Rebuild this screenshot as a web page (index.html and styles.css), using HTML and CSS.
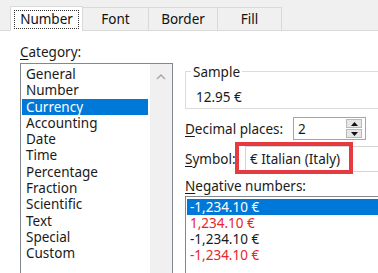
FILE: index.html
```html
<!DOCTYPE html>
<html>
<head>
<meta charset="utf-8">
<link rel="stylesheet" href="styles.css">
</head>
<body>
<div class="tabstrip">
  <div class="tab active w-number"><span class="focus">Number</span></div>
  <div class="tab w-font">Font</div>
  <div class="tab w-border">Border</div>
  <div class="tab w-fill">Fill</div>
</div>
<div class="panel">
  <div class="left">
    <div class="label"><u>C</u>ategory:</div>
    <div class="catlist">
      <div class="items">
        <div class="item">General</div>
        <div class="item">Number</div>
        <div class="item sel">Currency</div>
        <div class="item">Accounting</div>
        <div class="item">Date</div>
        <div class="item">Time</div>
        <div class="item">Percentage</div>
        <div class="item">Fraction</div>
        <div class="item">Scientific</div>
        <div class="item">Text</div>
        <div class="item">Special</div>
        <div class="item">Custom</div>
      </div>
      <div class="scrollbar">
        <svg class="chev" width="10" height="6" viewBox="0 0 10 6"><polyline points="1,5 5,1 9,5" fill="none" stroke="#a6a6a6" stroke-width="1.4"/></svg>
      </div>
    </div>
  </div>
  <div class="right">
    <div class="group">
      <div class="group-title">Sample</div>
      <div class="group-value">12.95 €</div>
    </div>
    <div class="row-dec">
      <div class="dec-label"><u>D</u>ecimal places:</div>
      <div class="spin">
        <span>2</span>
        <div class="spin-btns">
          <div class="sbtn up"><svg width="7" height="4" viewBox="0 0 7 4"><polygon points="0,4 3.5,0 7,4" fill="#111"/></svg></div>
          <div class="sbtn down"><svg width="7" height="4" viewBox="0 0 7 4"><polygon points="0,0 3.5,4 7,0" fill="#111"/></svg></div>
        </div>
      </div>
    </div>
    <div class="row-sym">
      <div class="sym-label"><u>S</u>ymbol:</div>
      <div class="combo">€ Italian (Italy)</div>
      <div class="redbox"></div>
    </div>
    <div class="label neg-label"><u>N</u>egative numbers:</div>
    <div class="neglist">
      <div class="neg-item sel">-1,234.10 €</div>
      <div class="neg-item red">1,234.10 €</div>
      <div class="neg-item">-1,234.10 €</div>
      <div class="neg-item red">-1,234.10 €</div>
    </div>
  </div>
</div>
</body>
</html>
```

FILE: styles.css
```css
html, body {
  margin: 0;
  padding: 0;
  width: 378px;
  height: 273px;
  overflow: hidden;
  background: #fff;
}
body {
  font-family: "Noto Sans", "Open Sans", sans-serif;
  font-size: 13.5px;
  color: #1a1a1a;
}
u { text-decoration-thickness: 1px; text-underline-offset: 2px; }

.tabstrip {
  display: flex;
  align-items: flex-end;
  height: 30px;
  background: #f0f0f0;
  border-bottom: 1px solid #d9d9d9;
  padding-left: 10px;
}
.tab {
  box-sizing: border-box;
  height: 23px;
  border: 1px solid #d9d9d9;
  border-bottom: none;
  margin-left: -1px;
  display: flex;
  align-items: center;
  justify-content: center;
  color: #111;
}
.tab.active {
  height: 25px;
  margin-bottom: -1px;
  background: #fff;
  margin-left: 0;
}
.w-number { width: 73px; }
.w-font { width: 67px; }
.w-border { width: 70px; }
.w-fill { width: 65px; }
.focus {
  box-sizing: border-box;
  width: 65px;
  height: 19px;
  border: 1px dotted #333;
  display: flex;
  align-items: center;
  justify-content: center;
}

.panel {
  display: flex;
  padding: 13px 0 0 20px;
}
.left { width: 153px; flex-shrink: 0; }
.right { width: 230px; flex-shrink: 0; margin-left: 12px; }
.label { line-height: 16px; height: 16px; white-space: nowrap; }

.catlist {
  margin-top: 3px;
  border: 1px solid #828790;
  height: 220px;
  display: flex;
}
.items {
  flex: 1;
  padding: 2px 2px 0 1px;
}
.item {
  line-height: 16.3px;
  height: 16.3px;
  padding-left: 4px;
  white-space: nowrap;
}
.item.sel { background: #0078d7; color: #fff; }
.scrollbar {
  width: 22px;
  background: #f0f0f0;
  display: flex;
  flex-direction: column;
  align-items: center;
}
.chev { margin-top: 10px; }

.group {
  margin-top: 27px;
  border: 1px solid #dcdcdc;
  padding: 0 0 3px 5px;
}
.group-title {
  width: fit-content;
  margin-top: -8px;
  line-height: 16px;
  padding: 0 2px;
  background: #fff;
}
.group-value {
  margin-top: 9px;
  line-height: 16px;
  padding-left: 5px;
}

.row-dec {
  margin-top: 8px;
  height: 23px;
  display: flex;
  align-items: center;
}
.dec-label { width: 108px; white-space: nowrap; }
.spin {
  box-sizing: border-box;
  width: 73px;
  height: 23px;
  border: 1px solid #a5a5a5;
  display: flex;
  align-items: center;
  padding-left: 4px;
}
.spin-btns {
  margin-left: auto;
  margin-right: 3px;
  width: 16px;
  height: 19px;
  display: flex;
  flex-direction: column;
  gap: 1px;
}
.sbtn {
  flex: 1;
  background: #e6e6e6;
  border: 1px solid #b9b9b9;
  display: flex;
  align-items: center;
  justify-content: center;
}

.row-sym {
  position: relative;
  margin-top: 6px;
  height: 26px;
  display: flex;
  align-items: center;
}
.sym-label { width: 60px; flex-shrink: 0; }
.combo {
  flex: 1;
  box-sizing: border-box;
  height: 26px;
  border: 1px solid #d5d5d5;
  padding-left: 4px;
  display: flex;
  align-items: center;
  white-space: nowrap;
}
.redbox {
  position: absolute;
  left: 50px;
  top: -4px;
  width: 118px;
  height: 32px;
  box-sizing: border-box;
  border: 4px solid #e53a40;
}

.neg-label { margin-top: 6px; }
.neglist {
  margin-top: 2px;
  border: 1px solid #828790;
  padding: 2px 1px 0;
  height: 100px;
}
.neg-item {
  line-height: 16px;
  height: 16px;
  padding-left: 3px;
  white-space: nowrap;
}
.neg-item.sel { background: #0078d7; color: #fff; }
.neg-item.red { color: #e8252b; }
```
